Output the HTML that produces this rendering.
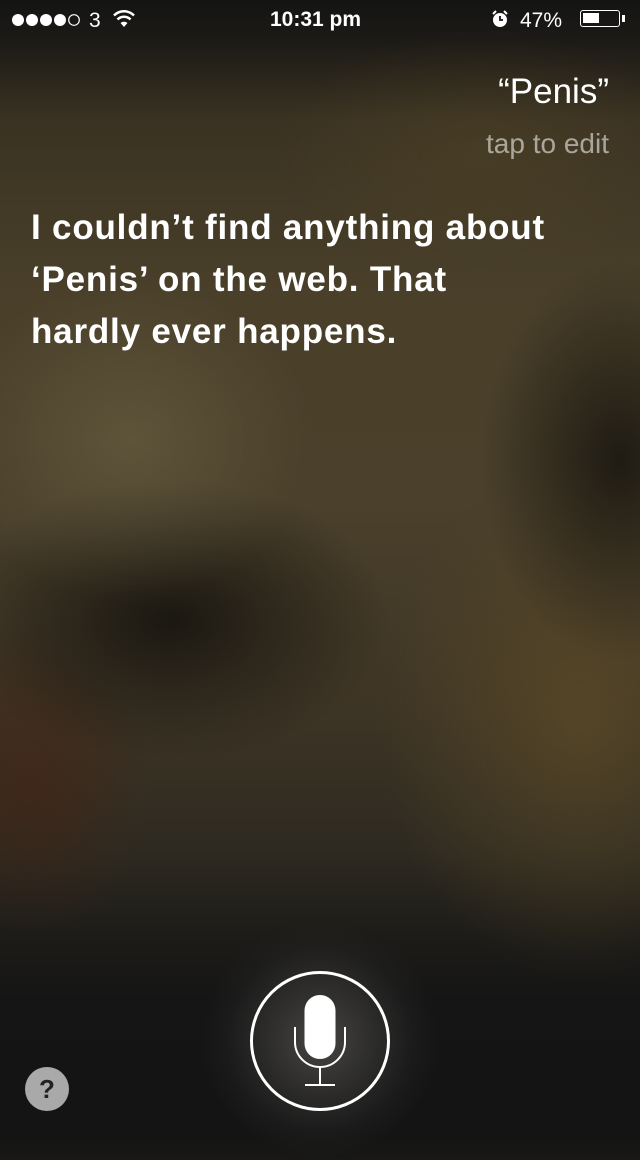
<!DOCTYPE html>
<html><head><meta charset="utf-8"><style>
html,body{margin:0;padding:0}
body{width:640px;height:1136px;overflow:hidden;position:relative;font-family:"Liberation Sans",sans-serif;color:#fff;
background:
radial-gradient(ellipse 180px 160px at 130px 440px, rgba(110,100,70,.55), transparent),
radial-gradient(ellipse 140px 200px at 620px 460px, rgba(20,18,14,.8), transparent),
radial-gradient(ellipse 220px 140px at 170px 620px, rgba(20,18,14,.85), transparent),
radial-gradient(ellipse 200px 260px at 580px 720px, rgba(100,80,40,.6), transparent),
radial-gradient(ellipse 120px 160px at 30px 780px, rgba(70,35,20,.6), transparent),
radial-gradient(ellipse 200px 120px at 480px 150px, rgba(90,75,40,.35), transparent),
linear-gradient(180deg,#141414 0px,#1c1a16 40px,#3a3222 120px,#4a402a 300px,#4a402b 500px,#3e3525 700px,#2e2a21 850px,#1c1b18 940px,#151515 1000px,#141414 1136px);}
.sb{position:absolute;top:0;left:0;width:640px;height:40px;font-size:21px}
.q{position:absolute;right:31px;top:72px;font-size:35px}
.tap{position:absolute;right:31px;top:128px;font-size:28px;color:rgba(255,255,255,.55)}
.ans{position:absolute;left:31px;top:202px;white-space:nowrap;font-size:35px;font-weight:bold;line-height:52px;letter-spacing:0.8px}
</style></head><body>
<div class="sb">
 <svg style="position:absolute;left:11px;top:13px" width="72" height="14" viewBox="0 0 72 14"><circle cx="7" cy="7" r="6" fill="#fff"/><circle cx="21" cy="7" r="6" fill="#fff"/><circle cx="35" cy="7" r="6" fill="#fff"/><circle cx="49" cy="7" r="6" fill="#fff"/><circle cx="63" cy="7" r="5.3" fill="none" stroke="#fff" stroke-width="1.2"/></svg>
 <div style="position:absolute;left:89px;top:9px">3</div>
 <svg style="position:absolute;left:112px;top:9px" width="24" height="20" viewBox="0 0 24 20"><path d="M12 18 L8.5 14 A5 5 0 0 1 15.5 14 Z" fill="#fff"/><path d="M5.5 10.5 A9 9 0 0 1 18.5 10.5" stroke="#fff" stroke-width="2.5" fill="none"/><path d="M2 6.5 A14 14 0 0 1 22 6.5" stroke="#fff" stroke-width="2.5" fill="none"/></svg>
 <div style="position:absolute;left:270px;top:8px;font-weight:bold">10:31 pm</div>
 <svg style="position:absolute;left:491px;top:10px" width="18" height="18" viewBox="0 0 18 18"><circle cx="9" cy="10" r="7" fill="#fff"/><path d="M9 6v4h3" stroke="#141414" stroke-width="1.8" fill="none"/><path d="M2 4l3-3M16 4l-3-3" stroke="#fff" stroke-width="2"/></svg>
 <div style="position:absolute;left:520px;top:9px">47%</div>
 <div style="position:absolute;left:580px;top:10px;width:40px;height:17px;border:1.5px solid #fff;border-radius:3px;box-sizing:border-box"><div style="margin:2px;width:16px;height:10px;background:#fff"></div></div>
 <div style="position:absolute;left:622px;top:15px;width:3px;height:7px;background:#fff"></div>
</div>
<div class="q">“Penis”</div>
<div class="tap">tap to edit</div>
<div class="ans">I couldn’t find anything about<br>‘Penis’ on the web. That<br>hardly ever happens.</div>
<div style="position:absolute;left:200px;top:920px;width:240px;height:240px;border-radius:50%;background:radial-gradient(circle,rgba(90,88,84,.7),rgba(40,40,40,.3) 55%,transparent 70%)"></div>
<div style="position:absolute;left:250px;top:971px;width:140px;height:140px;border:3px solid #fff;border-radius:50%;box-sizing:border-box"></div>
<svg style="position:absolute;left:280px;top:990px" width="80" height="100" viewBox="0 0 80 100">
<rect x="24.5" y="5" width="31" height="64" rx="15.5" fill="#fff"/>
<path d="M15 37 V52 A25 25 0 0 0 65 52 V37" stroke="#fff" stroke-width="2" fill="none"/>
<path d="M40 77 V95 M25 95 H55" stroke="#fff" stroke-width="2"/>
</svg>
<div style="position:absolute;left:25px;top:1067px;width:44px;height:44px;border-radius:50%;background:#a9a9a9;color:#222;font-size:26px;font-weight:bold;text-align:center;line-height:44px">?</div>
</body></html>
